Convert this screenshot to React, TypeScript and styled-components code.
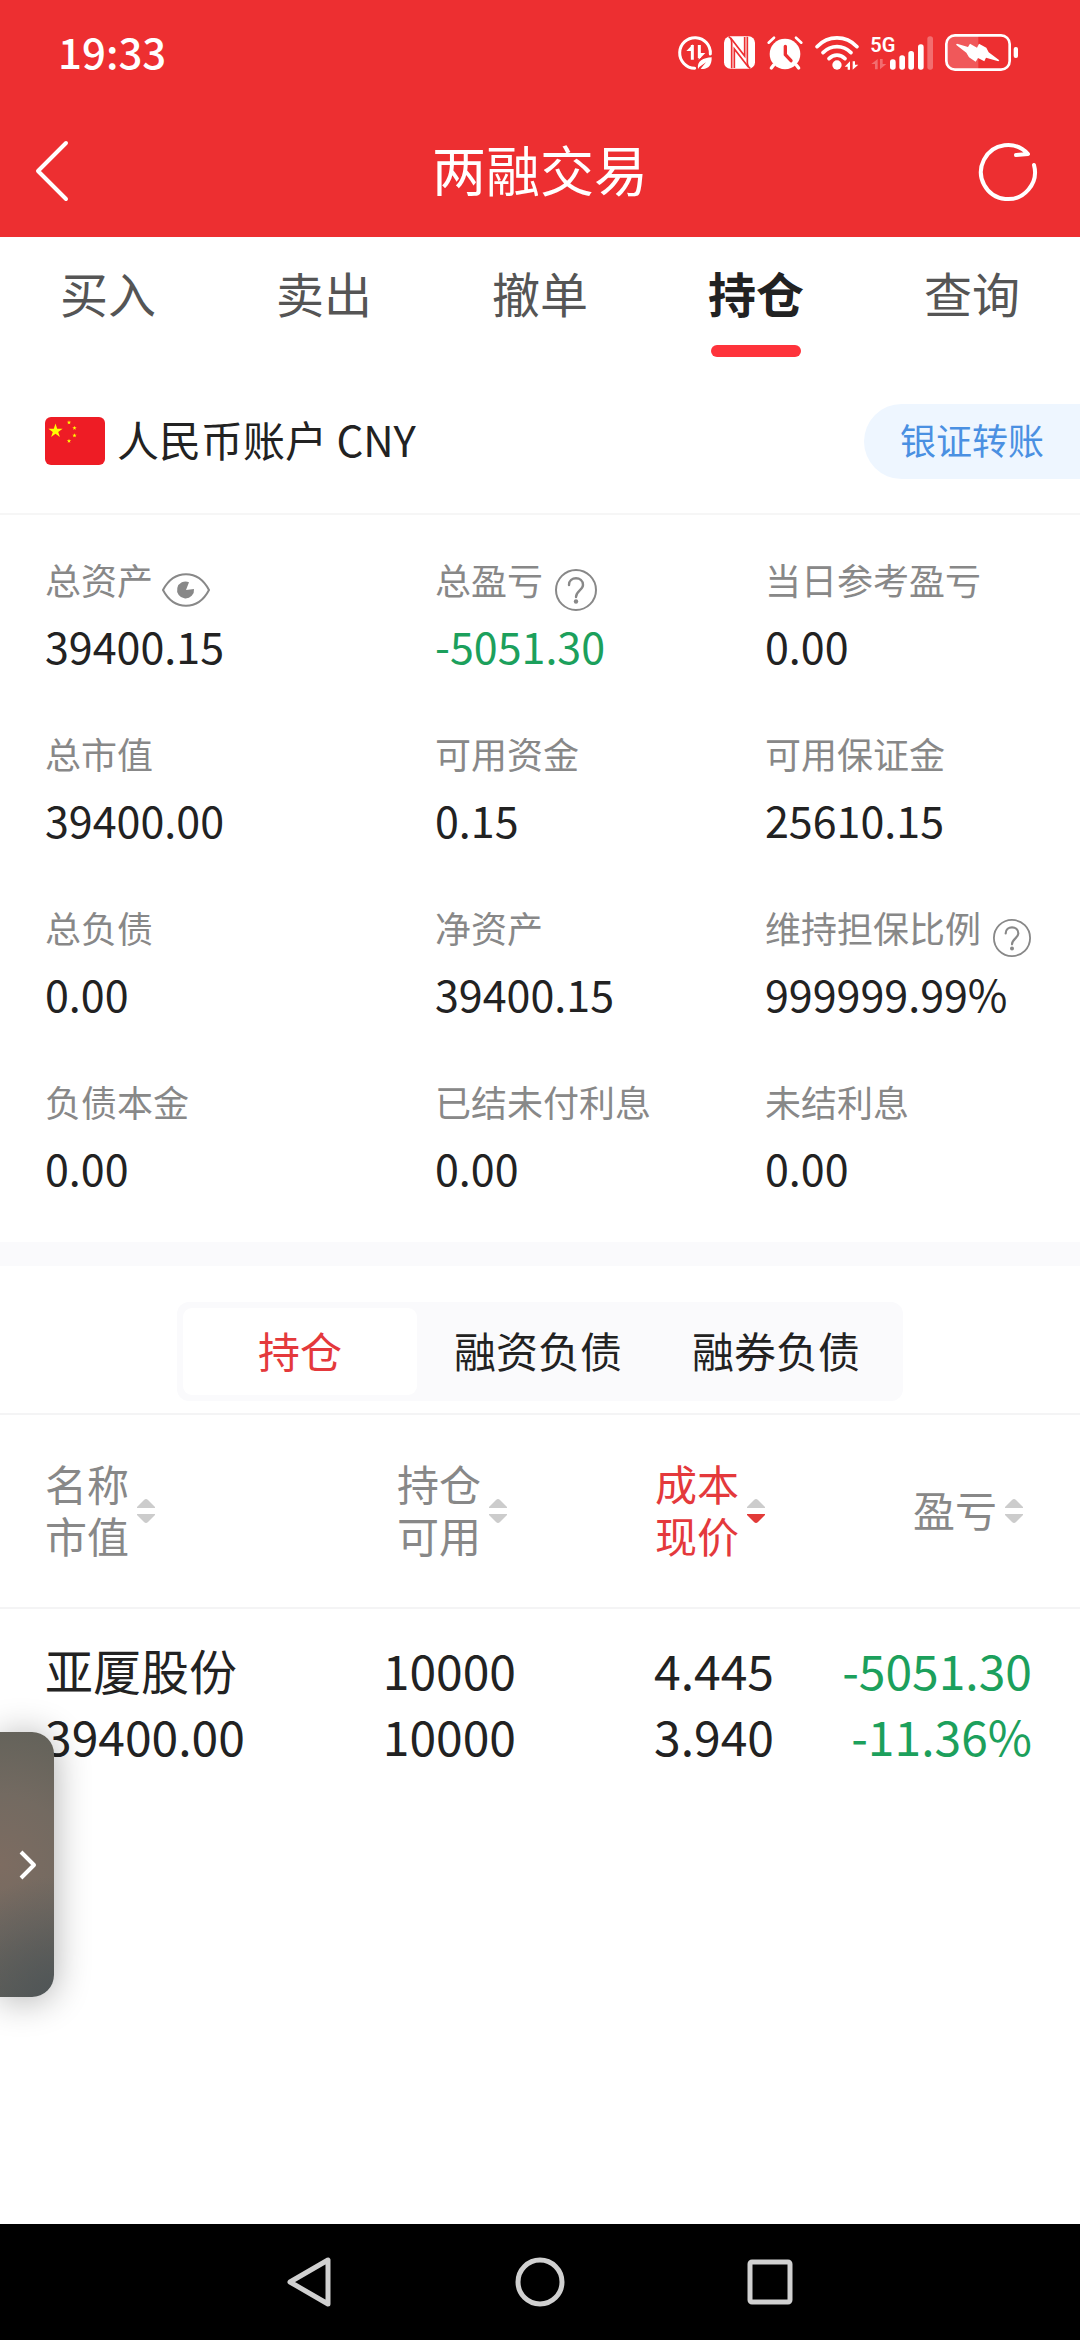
import React, { useState } from "react";
import styled, { createGlobalStyle } from "styled-components";

const GlobalStyle = createGlobalStyle`
  *, *::before, *::after { box-sizing: border-box; }
  html, body { margin: 0; padding: 0; background: #fff; }
  body, button {
    font-family: "Noto Sans CJK SC", "Noto Sans", sans-serif;
    color: #222;
  }
  button { border: 0; padding: 0; background: none; cursor: pointer; }
  svg { display: block; flex: none; overflow: visible; }
`;

const captionFont = `"Liberation Sans", "Noto Sans CJK SC", sans-serif`;

const Screen = styled.div`
  display: flex;
  flex-direction: column;
  min-height: 100vh;
  background: #fff;
`;

const TopArea = styled.header`
  background: #ed2f31;
  color: #fff;
`;

const StatusBar = styled.div`
  display: flex;
  align-items: center;
  justify-content: space-between;
  height: 105px;
  padding: 0 62px 0 58px;
`;

const Clock = styled.time`
  padding-bottom: 4px;
  font-size: 42px;
  line-height: 60px;
  font-weight: 500;
`;

const StatusIcons = styled.div`
  display: flex;
  align-items: center;
  gap: 12px;
`;

const TitleBar = styled.div`
  display: grid;
  grid-template-columns: 108px 1fr 108px;
  align-items: center;
  height: 132px;
`;

const IconButton = styled.button<{ $end?: boolean }>`
  display: flex;
  align-items: center;
  justify-content: ${(p) => (p.$end ? "flex-end" : "flex-start")};
  height: 100%;
  padding: ${(p) => (p.$end ? "0 42px 0 0" : "0 0 0 35px")};
`;

const Title = styled.h1`
  margin: 0;
  padding-bottom: 4px;
  font-size: 54px;
  line-height: 72px;
  font-weight: 400;
  text-align: center;
`;

const Tabs = styled.nav`
  display: grid;
  grid-template-columns: repeat(5, 1fr);
  height: 132px;
`;

const Tab = styled.button<{ $active: boolean }>`
  display: flex;
  flex-direction: column;
  align-items: center;
  padding-top: 25px;
  font-size: 48px;
  line-height: 60px;
  font-weight: ${(p) => (p.$active ? 700 : 400)};
  color: ${(p) => (p.$active ? "#222" : "#555")};

  &::after {
    content: "";
    width: 90px;
    height: 12px;
    margin-top: 23px;
    border-radius: 6px;
    background: ${(p) => (p.$active ? "#fe333b" : "transparent")};
  }
`;

const AccountBar = styled.div`
  display: flex;
  align-items: center;
  gap: 12px;
  height: 146px;
  padding-left: 45px;
  border-bottom: 2px solid #f6f6f6;
`;

const AccountName = styled.span`
  flex: 1;
  padding-bottom: 4px;
  font-size: 42px;
  line-height: 60px;
`;

const TransferButton = styled.button`
  width: 216px;
  height: 75px;
  padding-bottom: 4px;
  border-radius: 38px 0 0 38px;
  background: #eef6ff;
  color: #4a90e2;
  font-size: 36px;
  line-height: 54px;
`;

const Metrics = styled.dl`
  display: grid;
  grid-template-columns: 390fr 330fr 315fr;
  row-gap: 52px;
  margin: 0;
  padding: 41px 0 42px 45px;
`;

const Metric = styled.div`
  display: flex;
  flex-direction: column;
  gap: 5px;
  padding-bottom: 3px;
`;

const MetricLabel = styled.dt`
  display: flex;
  align-items: center;
  height: 54px;
  font-family: ${captionFont};
  font-size: 36px;
  line-height: 54px;
  color: #888;
`;

const HintButton = styled.button<{ $wide?: boolean }>`
  margin-left: ${(p) => (p.$wide ? "12px" : "9px")};
  padding-top: 14px;
`;

const MetricValue = styled.dd<{ $down?: boolean }>`
  margin: 0;
  font-size: 43px;
  line-height: 60px;
  color: ${(p) => (p.$down ? "#1ca05c" : "#222")};
`;

const Band = styled.div`
  height: 24px;
  background: #fafafc;
`;

const SegmentArea = styled.div`
  display: flex;
  justify-content: center;
  padding: 36px 0 12px;
  border-bottom: 2px solid #f4f4f5;
`;

const Segments = styled.div`
  display: flex;
  gap: 4px;
  width: 726px;
  padding: 6px;
  border-radius: 12px;
  background: #fafafc;
`;

const Segment = styled.button<{ $active: boolean }>`
  width: 234px;
  height: 87px;
  padding-bottom: 4px;
  border-radius: 9px;
  background: ${(p) => (p.$active ? "#fff" : "transparent")};
  color: ${(p) => (p.$active ? "#e4393c" : "#222")};
  font-size: 42px;
  line-height: 60px;
`;

const HoldingsHead = styled.thead`
  border-bottom: 2px solid #f4f4f5;
`;

const Holdings = styled.table`
  width: 100%;
  border-collapse: collapse;
  table-layout: fixed;
`;

const HeadCell = styled.th<{ $first?: boolean; $last?: boolean }>`
  height: 193px;
  padding: ${(p) => (p.$first ? "0 0 0 45px" : p.$last ? "0 57px 0 0" : "0 9px 0 0")};
  font-weight: 400;
`;

const SortButton = styled.button<{ $first?: boolean; $active?: boolean }>`
  display: flex;
  align-items: center;
  justify-content: ${(p) => (p.$first ? "flex-start" : "flex-end")};
  gap: 8px;
  width: 100%;
  font-family: ${captionFont};
  font-size: 42px;
  line-height: 52px;
  text-align: right;
  color: ${(p) => (p.$active ? "#e4393c" : "#888")};
`;

const HeadLines = styled.span`
  padding-top: 4px;
`;

const Line = styled.span`
  display: block;
`;

const Cell = styled.td<{ $first?: boolean; $last?: boolean; $down?: boolean }>`
  padding: ${(p) => (p.$first ? "27px 0 0 45px" : p.$last ? "27px 48px 0 0" : "27px 0 0")};
  font-size: 48px;
  line-height: 66px;
  text-align: ${(p) => (p.$first ? "left" : "right")};
  color: ${(p) => (p.$down ? "#1ca05c" : "#222")};
`;

const Content = styled.main`
  flex: 1;
`;

const Drawer = styled.button`
  position: absolute;
  left: 0;
  top: 1732px;
  display: flex;
  align-items: center;
  justify-content: flex-end;
  width: 54px;
  height: 265px;
  padding-right: 17px;
  border-radius: 0 22px 22px 0;
  background:
    radial-gradient(circle at 100% 100%, #4f5557 0, rgba(79, 85, 87, 0) 120px),
    radial-gradient(circle at 0 50%, #7d6c61 0, #736a61 70px, #63625a 140px);
  box-shadow: 0 3px 36px rgba(0, 0, 0, 0.32);
`;

const SystemNav = styled.footer`
  display: flex;
  justify-content: center;
  height: 116px;
  background: #000;
`;

const SystemButton = styled.button`
  display: flex;
  align-items: center;
  justify-content: center;
  width: 230px;
`;

const DataSaverIcon = () => (
  <svg width="34" height="34" viewBox="0 0 102 102" fill="none" stroke="#fff">
    <path d="M50 97 A46 46 0 1 1 97 54" strokeWidth="9" strokeLinecap="round" />
    <path d="M43 27 V71 M64 27 V66" strokeWidth="9" />
    <path d="M45 25 L25 45 H45 Z M62 71 L82 51 H62 Z" fill="#fff" stroke="none" />
    <path d="M60 99 C56 74 76 66 101 64 C102 90 88 102 68 98 L84 79 L64 93 Z" fill="#fff" stroke="none" />
  </svg>
);

const NfcIcon = () => (
  <svg width="31" height="33" viewBox="0 0 93 99">
    <rect x="0" y="1" width="93" height="97" rx="19" fill="#fff" />
    <g fill="none" stroke="#ed2f31" strokeWidth="5">
      <path d="M14 2 Q23 6 23 20 V97" />
      <path d="M79 97 Q70 93 70 79 V2" />
      <path d="M20 6 L62 60 V3" />
      <path d="M73 93 L31 39 V96" />
    </g>
  </svg>
);

const AlarmIcon = () => (
  <svg width="36" height="34" viewBox="0 0 108 102" fill="none" stroke="#fff" strokeLinecap="round">
    <circle cx="54" cy="54" r="46" fill="#fff" stroke="none" />
    <path d="M5 20 L21 5 M103 20 L87 5" strokeWidth="8" />
    <path d="M20 87 L13 96 M88 87 L95 96" strokeWidth="10" />
    <path d="M55 31 V56 L72 74" stroke="#ed2f31" strokeWidth="10" />
  </svg>
);

const WifiIcon = () => (
  <svg width="44" height="34" viewBox="0 0 132 102" fill="none" stroke="#fff" strokeWidth="11" strokeLinecap="round">
    <path d="M6 32 C40 -3 92 -3 126 32" />
    <path d="M24 50 C48 26 84 26 108 50" />
    <path d="M42 68 C56 54 76 54 90 68" />
    <circle cx="66" cy="87" r="14" fill="#fff" stroke="none" />
    <path d="M105 76 V101 H98 V92 H89 Z M113 101 V76 H120 V86 H130 Z" fill="#fff" stroke="none" />
  </svg>
);

const SignalIcon = () => (
  <svg width="62" height="34" viewBox="0 0 186 102">
    <text x="-2" y="48" fill="#fff" fontFamily="Roboto, sans-serif" fontWeight="600" fontSize="60">
      5G
    </text>
    <path d="M20 69 V100 H12 V84 H1 Z M27 100 V69 H35 V84 H46 Z" fill="#fff" opacity="0.3" />
    <g fill="#fff">
      <rect x="57" y="70" width="17" height="31" rx="8" />
      <rect x="85" y="58" width="17" height="43" rx="8" />
      <rect x="112" y="45" width="17" height="56" rx="8" />
      <rect x="141" y="25" width="17" height="76" rx="8" />
      <rect x="169" y="1" width="17" height="100" rx="8" opacity="0.3" />
    </g>
  </svg>
);

const BatteryIcon = () => (
  <svg width="73" height="37" viewBox="0 0 219 111">
    <path d="M28 6 H100 V105 H28 Q6 105 6 83 V28 Q6 6 28 6 Z" fill="#fff" opacity="0.2" />
    <rect x="4" y="4" width="190" height="103" rx="26" fill="none" stroke="#fff" strokeWidth="8" />
    <rect x="206" y="39" width="13" height="33" rx="6" fill="#fff" />
    <path
      d="M36 29 L69 39 L75 29 L96 41 L102 29 L124 41 L131 55 L163 79 L160 82 L123 71 L118 82 L99 72 L92 83 L72 70 L64 56 L33 32 Z"
      fill="#fff"
    />
  </svg>
);

const BackIcon = () => (
  <svg width="34" height="62" viewBox="0 0 34 62" fill="none" stroke="#fff" strokeWidth="4" strokeLinecap="round" strokeLinejoin="round">
    <path d="M31 3 L3 31 L31 59" />
  </svg>
);

const RefreshIcon = () => (
  <svg width="60" height="60" viewBox="0 0 60 60" fill="none" stroke="#fff" strokeWidth="4" strokeLinecap="round" strokeLinejoin="round">
    <path d="M56 24 A27 27 0 1 1 50 13 L38 14" />
  </svg>
);

const star = (cx: number, cy: number, r: number) =>
  Array.from({ length: 10 }, (_, i) => {
    const radius = i % 2 ? r * 0.382 : r;
    const angle = (Math.PI / 5) * i - Math.PI / 2;
    return `${(cx + radius * Math.cos(angle)).toFixed(2)},${(cy + radius * Math.sin(angle)).toFixed(2)}`;
  }).join(" ");

const FlagIcon = () => (
  <svg width="60" height="48" viewBox="0 0 60 48">
    <rect width="60" height="48" rx="6" fill="#ee1c25" />
    <g fill="#ff0">
      <polygon points={star(10.5, 14, 7.5)} />
      <polygon points={star(24, 5.5, 2.3)} />
      <polygon points={star(29.5, 11, 2.3)} />
      <polygon points={star(29.5, 18.5, 2.3)} />
      <polygon points={star(24, 24, 2.3)} />
    </g>
  </svg>
);

const EyeIcon = () => (
  <svg width="48" height="34" viewBox="0 0 48 34" fill="none" stroke="#888" strokeWidth="2">
    <path d="M1 17 C12 -4 36 -4 47 17 C36 38 12 38 1 17 Z" />
    <path d="M24 17 L32 16 A8.5 8.5 0 1 1 27 9.2 Z" fill="#888" stroke="none" />
  </svg>
);

const QuestionIcon = ({ size }: { size: number }) => (
  <svg width={size} height={size} viewBox="0 0 42 42" fill="none" stroke="#888" strokeWidth="2">
    <circle cx="21" cy="21" r="20" />
    <path d="M14 16 C14 7 28 7 28 16 C28 21 21 22 21 28" strokeWidth="2.4" strokeLinecap="round" />
    <circle cx="21" cy="32.5" r="2.2" fill="#888" stroke="none" />
  </svg>
);

const SortIcon = ({ down }: { down?: boolean }) => (
  <svg width="18" height="26" viewBox="0 0 18 26">
    <path d="M0 10 V9 L7 2 Q9 0 11 2 L18 9 V10 Z" fill="#ccc" />
    <path d="M0 16 V17 L7 24 Q9 26 11 24 L18 17 V16 Z" fill={down ? "#e23a38" : "#ccc"} />
  </svg>
);

const ChevronIcon = () => (
  <svg width="18" height="30" viewBox="0 0 18 30" fill="none" stroke="#fff" strokeWidth="4" strokeLinejoin="round">
    <path d="M2 2 L15 15 L2 28" />
  </svg>
);

type Hint = "eye" | "help" | "helpSmall";

const metrics: { label: string; value: string; hint?: Hint; down?: boolean }[] = [
  { label: "总资产", value: "39400.15", hint: "eye" },
  { label: "总盈亏", value: "-5051.30", hint: "help", down: true },
  { label: "当日参考盈亏", value: "0.00" },
  { label: "总市值", value: "39400.00" },
  { label: "可用资金", value: "0.15" },
  { label: "可用保证金", value: "25610.15" },
  { label: "总负债", value: "0.00" },
  { label: "净资产", value: "39400.15" },
  { label: "维持担保比例", value: "999999.99%", hint: "helpSmall" },
  { label: "负债本金", value: "0.00" },
  { label: "已结未付利息", value: "0.00" },
  { label: "未结利息", value: "0.00" },
];

const tabs = ["买入", "卖出", "撤单", "持仓", "查询"];
const segments = ["持仓", "融资负债", "融券负债"];
const columns = [["名称", "市值"], ["持仓", "可用"], ["成本", "现价"], ["盈亏"]];
const columnWidth = `${(258 / 1080) * 100}%`;
const holdings = [
  [["亚厦股份", "39400.00"], ["10000", "10000"], ["4.445", "3.940"], ["-5051.30", "-11.36%"]],
];

export default function App() {
  const [tab, setTab] = useState("持仓");
  const [segment, setSegment] = useState("持仓");
  const [sorted, setSorted] = useState(2);

  return (
    <Screen>
      <GlobalStyle />
      <TopArea>
        <StatusBar>
          <Clock>19:33</Clock>
          <StatusIcons>
            <DataSaverIcon />
            <NfcIcon />
            <AlarmIcon />
            <WifiIcon />
            <SignalIcon />
            <BatteryIcon />
          </StatusIcons>
        </StatusBar>
        <TitleBar>
          <IconButton aria-label="返回">
            <BackIcon />
          </IconButton>
          <Title>两融交易</Title>
          <IconButton $end aria-label="刷新">
            <RefreshIcon />
          </IconButton>
        </TitleBar>
      </TopArea>

      <Content>
        <Tabs>
          {tabs.map((name) => (
            <Tab key={name} $active={name === tab} onClick={() => setTab(name)}>
              {name}
            </Tab>
          ))}
        </Tabs>

        <AccountBar>
          <FlagIcon />
          <AccountName>人民币账户 CNY</AccountName>
          <TransferButton>银证转账</TransferButton>
        </AccountBar>

        <Metrics>
          {metrics.map((m) => (
            <Metric key={m.label}>
              <MetricLabel>
                {m.label}
                {m.hint && (
                  <HintButton $wide={m.hint !== "eye"} aria-label={m.label}>
                    {m.hint === "eye" ? <EyeIcon /> : <QuestionIcon size={m.hint === "help" ? 42 : 38} />}
                  </HintButton>
                )}
              </MetricLabel>
              <MetricValue $down={m.down}>{m.value}</MetricValue>
            </Metric>
          ))}
        </Metrics>

        <Band />

        <SegmentArea>
          <Segments>
            {segments.map((name) => (
              <Segment key={name} $active={name === segment} onClick={() => setSegment(name)}>
                {name}
              </Segment>
            ))}
          </Segments>
        </SegmentArea>

        <Holdings>
          <colgroup>
            <col style={{ width: columnWidth }} />
            <col style={{ width: columnWidth }} />
            <col style={{ width: columnWidth }} />
            <col />
          </colgroup>
          <HoldingsHead>
            <tr>
              {columns.map((lines, i) => (
                <HeadCell key={lines[0]} $first={i === 0} $last={i === 3} scope="col">
                  <SortButton $first={i === 0} $active={i === sorted} onClick={() => setSorted(i)}>
                    <HeadLines>
                      {lines.map((line) => (
                        <Line key={line}>{line}</Line>
                      ))}
                    </HeadLines>
                    <SortIcon down={i === sorted} />
                  </SortButton>
                </HeadCell>
              ))}
            </tr>
          </HoldingsHead>
          <tbody>
            {holdings.map((row) => (
              <tr key={row[0][0]}>
                {row.map((lines, i) => (
                  <Cell key={i} $first={i === 0} $last={i === 3} $down={i === 3}>
                    {lines.map((line, j) => (
                      <Line key={j}>{line}</Line>
                    ))}
                  </Cell>
                ))}
              </tr>
            ))}
          </tbody>
        </Holdings>
      </Content>

      <Drawer aria-label="展开">
        <ChevronIcon />
      </Drawer>

      <SystemNav>
        <SystemButton aria-label="后退">
          <svg width="46" height="52" viewBox="0 0 46 52" fill="none" stroke="#d0d0d0" strokeWidth="5" strokeLinejoin="round">
            <path d="M41 4 V48 L3 26 Z" />
          </svg>
        </SystemButton>
        <SystemButton aria-label="主屏幕">
          <svg width="50" height="50" viewBox="0 0 50 50" fill="none" stroke="#d0d0d0" strokeWidth="5">
            <circle cx="25" cy="25" r="22" />
          </svg>
        </SystemButton>
        <SystemButton aria-label="最近任务">
          <svg width="46" height="46" viewBox="0 0 46 46" fill="none" stroke="#d0d0d0" strokeWidth="5">
            <rect x="3" y="3" width="40" height="40" rx="2" />
          </svg>
        </SystemButton>
      </SystemNav>
    </Screen>
  );
}
